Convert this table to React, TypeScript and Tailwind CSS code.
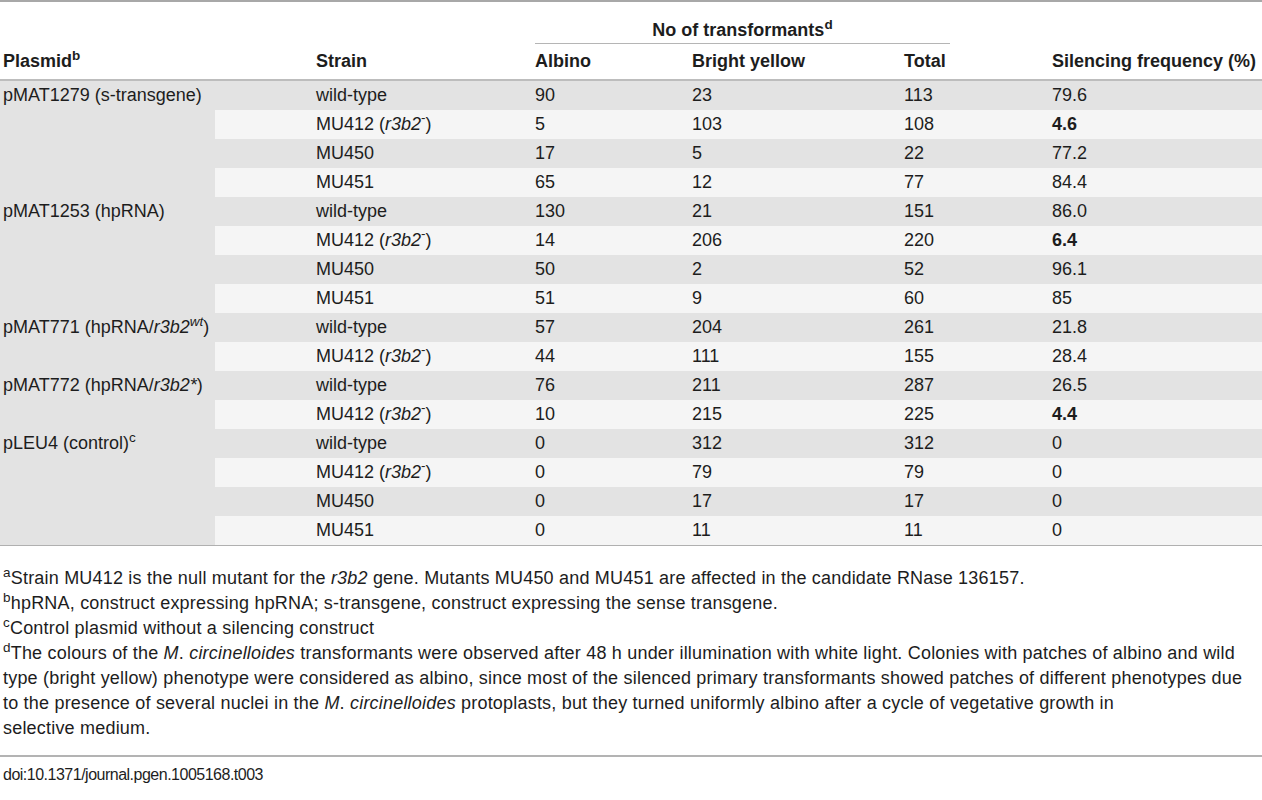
const GRID = "grid grid-cols-[215px_320px_157px_212px_148px_1fr]";

type Row = { strain: React.ReactNode; albino: string; yellow: string; total: string; freq: string; bold?: boolean };
type Group = { plasmid: React.ReactNode; rows: Row[] };

const r3b2Minus = (
  <>
    MU412 (<i>r3b2</i>
    <sup>-</sup>)
  </>
);

const groups: Group[] = [
  {
    plasmid: "pMAT1279 (s-transgene)",
    rows: [
      { strain: "wild-type", albino: "90", yellow: "23", total: "113", freq: "79.6" },
      { strain: r3b2Minus, albino: "5", yellow: "103", total: "108", freq: "4.6", bold: true },
      { strain: "MU450", albino: "17", yellow: "5", total: "22", freq: "77.2" },
      { strain: "MU451", albino: "65", yellow: "12", total: "77", freq: "84.4" },
    ],
  },
  {
    plasmid: "pMAT1253 (hpRNA)",
    rows: [
      { strain: "wild-type", albino: "130", yellow: "21", total: "151", freq: "86.0" },
      { strain: r3b2Minus, albino: "14", yellow: "206", total: "220", freq: "6.4", bold: true },
      { strain: "MU450", albino: "50", yellow: "2", total: "52", freq: "96.1" },
      { strain: "MU451", albino: "51", yellow: "9", total: "60", freq: "85" },
    ],
  },
  {
    plasmid: (
      <>
        pMAT771 (hpRNA/<i>r3b2</i>
        <sup>
          <i>wt</i>
        </sup>
        )
      </>
    ),
    rows: [
      { strain: "wild-type", albino: "57", yellow: "204", total: "261", freq: "21.8" },
      { strain: r3b2Minus, albino: "44", yellow: "111", total: "155", freq: "28.4" },
    ],
  },
  {
    plasmid: (
      <>
        pMAT772 (hpRNA/<i>r3b2*</i>)
      </>
    ),
    rows: [
      { strain: "wild-type", albino: "76", yellow: "211", total: "287", freq: "26.5" },
      { strain: r3b2Minus, albino: "10", yellow: "215", total: "225", freq: "4.4", bold: true },
    ],
  },
  {
    plasmid: (
      <>
        pLEU4 (control)<sup>c</sup>
      </>
    ),
    rows: [
      { strain: "wild-type", albino: "0", yellow: "312", total: "312", freq: "0" },
      { strain: r3b2Minus, albino: "0", yellow: "79", total: "79", freq: "0" },
      { strain: "MU450", albino: "0", yellow: "17", total: "17", freq: "0" },
      { strain: "MU451", albino: "0", yellow: "11", total: "11", freq: "0" },
    ],
  },
];

const spans: Record<number, string> = { 2: "row-span-2", 4: "row-span-4" };

export default function App() {
  let idx = 0;
  return (
    <div className="w-[1262px] h-[800px] bg-white text-[#1d1d1d] font-['Liberation_Sans',Arial,sans-serif] text-[18px]">
      <div className="border-t-2 border-[#a8a8a8]">
        {/* header */}
        <div className={GRID}>
          <div className="col-start-3 col-span-3 w-[415px] pt-[17px] pb-[2px] leading-[22px] text-center font-bold border-b border-[#b5b5b5]">
            No of transformants<sup>d</sup>
          </div>
        </div>
        <div className={`${GRID} h-[37px] items-center font-bold border-b-2 border-[#bdbdbd]`}>
          <div className="pl-[3px]">
            Plasmid<sup>b</sup>
          </div>
          <div className="pl-[101px]">Strain</div>
          <div>Albino</div>
          <div>Bright yellow</div>
          <div>Total</div>
          <div>Silencing frequency (%)</div>
        </div>

        {/* body */}
        <div className={`${GRID} auto-rows-[29px] border-b border-[#b0b0b0]`}>
          {groups.map((g, gi) => (
            <GroupRows key={gi} group={g} start={(idx += g.rows.length) - g.rows.length} />
          ))}
        </div>
      </div>

      {/* footnotes */}
      <div className="pt-[20px] pl-[3px] text-[18px] leading-[25px] tracking-[0.2px] whitespace-nowrap">
        <p>
          <sup>a</sup>Strain MU412 is the null mutant for the <i>r3b2</i> gene. Mutants MU450 and MU451 are affected in the candidate
          RNase 136157.
        </p>
        <p>
          <sup>b</sup>hpRNA, construct expressing hpRNA; s-transgene, construct expressing the sense transgene.
        </p>
        <p>
          <sup>c</sup>Control plasmid without a silencing construct
        </p>
        <p>
          <sup>d</sup>The colours of the <i>M</i>. <i>circinelloides</i> transformants were observed after 48 h under illumination with
          white light. Colonies with patches of albino and wild
          <br />
          type (bright yellow) phenotype were considered as albino, since most of the silenced primary transformants showed patches of
          different phenotypes due
          <br />
          to the presence of several nuclei in the <i>M</i>. <i>circinelloides</i> protoplasts, but they turned uniformly albino after a
          cycle of vegetative growth in
          <br />
          selective medium.
        </p>
      </div>
      <div className="mt-[14px] border-t-2 border-[#b3b3b3] pt-[6px] pl-[3px] text-[16px] leading-[24px] tracking-[-0.5px]">
        doi:10.1371/journal.pgen.1005168.t003
      </div>
    </div>
  );
}

function GroupRows({ group, start }: { group: Group; start: number }) {
  return (
    <>
      <div className={`col-start-1 ${spans[group.rows.length]} bg-[#e3e3e3] pl-[3px] leading-[29px]`}>{group.plasmid}</div>
      {group.rows.map((r, i) => {
        const bg = (start + i) % 2 === 0 ? "bg-[#e3e3e3]" : "bg-[#f5f5f5]";
        const cell = `${bg} flex items-center`;
        return (
          <div key={i} className="contents">
            <div className={`${cell} pl-[101px]`}>{r.strain}</div>
            <div className={cell}>{r.albino}</div>
            <div className={cell}>{r.yellow}</div>
            <div className={cell}>{r.total}</div>
            <div className={`${cell} ${r.bold ? "font-bold" : ""}`}>{r.freq}</div>
          </div>
        );
      })}
    </>
  );
}
